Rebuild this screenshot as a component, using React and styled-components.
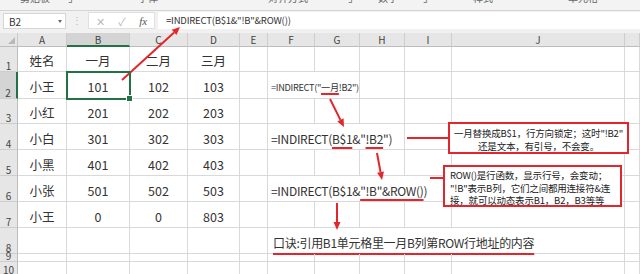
import React from 'react';
import styled, {createGlobalStyle} from 'styled-components';

const GlobalStyle = createGlobalStyle`
	html, body {
		margin: 0;
		padding: 0;
		background: #ffffff;
	}
	body {
		font-family: "Noto Sans CJK SC", "Noto Sans", sans-serif;
	}
`;

const RED = '#e3262b';
const GREEN = '#217346';

const Page = styled.div`
	position: relative;
	width: 640px;
	height: 274px;
	overflow: hidden;
	background: #ffffff;
`;

const Ribbon = styled.div`
	display: flex;
	height: 10px;
	overflow: hidden;
	background: #f3f3f3;
	border-bottom: 1px solid #d4d4d4;
`;

const RibbonLabel = styled.span`
	margin-left: ${(props) => props.$gap}px;
	margin-top: -8px;
	font-size: 10px;
	line-height: 12px;
	color: #666;
	white-space: nowrap;
`;

const FormulaBar = styled.div`
	display: flex;
	align-items: flex-start;
	height: 22px;
	background: #f1f1f1;
`;

const NameBox = styled.div`
	display: flex;
	align-items: center;
	justify-content: space-between;
	box-sizing: border-box;
	width: 63px;
	height: 16px;
	margin: 2px 0 0 3px;
	padding: 0 3px 0 5px;
	background: #ffffff;
	border: 1px solid #d6d6d6;
	font-size: 10px;
	color: #333;
`;

const Caret = styled.span`
	width: 0;
	height: 0;
	border-left: 2.5px solid transparent;
	border-right: 2.5px solid transparent;
	border-top: 3px solid #666;
`;

const Dots = styled.div`
	width: 22px;
	text-align: center;
	font-size: 10px;
	line-height: 18px;
	color: #b5b5b5;
`;

const ActionBox = styled.div`
	display: flex;
	align-items: center;
	justify-content: space-around;
	box-sizing: border-box;
	width: 67px;
	height: 17px;
	margin-top: 1px;
	background: #ffffff;
	border: 1px solid #e0e0e0;
	font-size: 11px;
	color: #b9b9b9;
`;

const Fx = styled.span`
	font-family: "Liberation Serif", serif;
	font-style: italic;
	font-size: 11px;
	color: #555;
`;

const FormulaInput = styled.div`
	flex: 1;
	box-sizing: border-box;
	height: 17px;
	margin: 1px 0 0 3px;
	padding-left: 8px;
	background: #ffffff;
	font-size: 9.5px;
	letter-spacing: -0.2px;
	line-height: 17px;
	color: #333;
	white-space: nowrap;
`;

const Sheet = styled.div`
	display: grid;
	grid-template-columns: 18px 49px 63px 58px 52px 28px 47px 45px 45px 47px 173px 15px;
	grid-template-rows: 14px 25px 27px 25px 26px 26px 26px 26px 26px 8px 14px;
`;

const Corner = styled.div`
	position: relative;
	box-sizing: border-box;
	background: #e6e6e6;
	border-right: 1px solid #c9c9c9;
	border-bottom: 1px solid #bdbdbd;
	&::after {
		content: '';
		position: absolute;
		right: 2px;
		bottom: 2px;
		border-left: 7px solid transparent;
		border-bottom: 7px solid #b9b9b9;
	}
`;

const ColHead = styled.div`
	display: flex;
	align-items: center;
	justify-content: center;
	box-sizing: border-box;
	background: ${(props) => (props.$active ? '#d4d4d4' : '#e6e6e6')};
	border-right: 1px solid #cdcdcd;
	border-bottom: ${(props) => (props.$active ? `2px solid ${GREEN}` : '1px solid #bdbdbd')};
	font-size: 10px;
	color: #444;
`;

const RowHead = styled.div`
	display: flex;
	align-items: flex-end;
	justify-content: center;
	box-sizing: border-box;
	background: ${(props) => (props.$active ? '#d4d4d4' : '#e6e6e6')};
	border-bottom: 1px solid #cdcdcd;
	border-right: ${(props) => (props.$active ? `2px solid ${GREEN}` : '1px solid #bdbdbd')};
	font-size: 10px;
	line-height: 10px;
	color: #444;
`;

const Cell = styled.div`
	position: relative;
	display: flex;
	align-items: center;
	justify-content: ${(props) => (props.$left ? 'flex-start' : 'center')};
	grid-column: span ${(props) => props.$span || 1};
	box-sizing: border-box;
	padding: 3px 0 0 ${(props) => (props.$left ? props.$indent || 3 : 0)}px;
	border-right: 1px solid #d9d9d9;
	border-bottom: 1px solid #d9d9d9;
	font-size: ${(props) => props.$size || 12.5}px;
	letter-spacing: ${(props) => (props.$left ? '-0.3px' : '0')};
	color: #333;
	white-space: nowrap;
	outline: ${(props) => (props.$selected ? `2px solid ${GREEN}` : 'none')};
	outline-offset: -1px;
	z-index: ${(props) => (props.$selected ? 2 : 0)};
	&::after {
		content: '';
		display: ${(props) => (props.$selected ? 'block' : 'none')};
		position: absolute;
		right: -4px;
		bottom: -4px;
		width: 5px;
		height: 5px;
		background: ${GREEN};
		border: 1px solid #ffffff;
	}
`;

const Mark = styled.span`
	text-decoration: underline;
	text-decoration-color: ${RED};
	text-decoration-thickness: 2px;
	text-underline-offset: ${(props) => props.$offset || 3}px;
	text-decoration-skip-ink: none;
`;

const Note = styled.div`
	position: absolute;
	left: ${(props) => props.$x}px;
	top: ${(props) => props.$y}px;
	box-sizing: border-box;
	width: ${(props) => props.$w}px;
	height: ${(props) => props.$h}px;
	padding: ${(props) => (props.$center ? '3px 0 0' : '2px 0 0 5px')};
	background: #ffffff;
	border: 2px solid ${RED};
	font-size: 9.5px;
	letter-spacing: -0.2px;
	line-height: ${(props) => (props.$center ? 13 : 12.5)}px;
	color: #222;
	text-align: ${(props) => (props.$center ? 'center' : 'left')};
	white-space: nowrap;
	overflow: hidden;
`;

const Marks = styled.svg`
	position: absolute;
	left: 0;
	top: 0;
	pointer-events: none;
`;

const letters = ['A', 'B', 'C', 'D', 'E', 'F', 'G', 'H', 'I', 'J', 'K'];

const table = [
	['姓名', '一月', '二月', '三月'],
	['小王', '101', '102', '103'],
	['小红', '201', '202', '203'],
	['小白', '301', '302', '303'],
	['小黑', '401', '402', '403'],
	['小张', '501', '502', '503'],
	['小王', '0', '0', '803'],
	[],
	[],
	[]
];

const notes = {
	2: {
		span: 2,
		size: 9.2,
		content: (
			<>
				=INDIRECT("<Mark $offset={2}>一月</Mark>!B2")
			</>
		)
	},
	4: {
		span: 3,
		size: 12,
		content: (
			<>
				=INDIRECT(<Mark>B$1</Mark>&"<Mark>!B2</Mark>")
			</>
		)
	},
	6: {
		span: 4,
		size: 12,
		content: (
			<>
				=INDIRECT(B$1&<Mark>"!B"&ROW()</Mark>)
			</>
		)
	},
	8: {
		span: 5,
		size: 12,
		indent: 5,
		content: <Mark $offset={5}>口诀:引用B1单元格里一月B列第ROW行地址的内容</Mark>
	}
};

function Arrow({x1, y1, x2, y2}) {
	const dx = x2 - x1;
	const dy = y2 - y1;
	const len = Math.hypot(dx, dy);
	const ux = dx / len;
	const uy = dy / len;
	const bx = x2 - ux * 8;
	const by = y2 - uy * 8;
	const px = -uy * 3.5;
	const py = ux * 3.5;
	return (
		<>
			<line x1={x1} y1={y1} x2={bx} y2={by} stroke={RED} strokeWidth="2" />
			<polygon
				points={`${x2},${y2} ${bx + px},${by + py} ${bx - px},${by - py}`}
				fill={RED}
			/>
		</>
	);
}

function SheetRows() {
	const out = [];
	table.forEach((row, r) => {
		const num = r + 1;
		out.push(
			<RowHead key={`h${num}`} $active={num === 2}>
				{num}
			</RowHead>
		);
		const note = notes[num];
		let c = 0;
		while (c < letters.length) {
			if (note && c === 5) {
				out.push(
					<Cell
						key={`${num}-${c}`}
						$left
						$span={note.span}
						$size={note.size}
						$indent={note.indent}
					>
						{note.content}
					</Cell>
				);
				c += note.span;
				continue;
			}
			out.push(
				<Cell key={`${num}-${c}`} $selected={num === 2 && c === 1}>
					{row[c] || ''}
				</Cell>
			);
			c += 1;
		}
	});
	return out;
}

export default function App() {
	return (
		<>
			<GlobalStyle />
			<Page>
				<Ribbon>
					<RibbonLabel $gap={20}>剪贴板</RibbonLabel>
					<RibbonLabel $gap={18}>⌟</RibbonLabel>
					<RibbonLabel $gap={65}>字体</RibbonLabel>
					<RibbonLabel $gap={110}>对齐方式</RibbonLabel>
					<RibbonLabel $gap={40}>⌟</RibbonLabel>
					<RibbonLabel $gap={25}>数字</RibbonLabel>
					<RibbonLabel $gap={25}>⌟</RibbonLabel>
					<RibbonLabel $gap={45}>样式</RibbonLabel>
					<RibbonLabel $gap={75}>单元格</RibbonLabel>
				</Ribbon>
				<FormulaBar>
					<NameBox>
						B2
						<Caret />
					</NameBox>
					<Dots>⋮</Dots>
					<ActionBox>
						<span>✕</span>
						<span>✓</span>
						<Fx>fx</Fx>
					</ActionBox>
					<FormulaInput>=INDIRECT(B$1&"!B"&ROW())</FormulaInput>
				</FormulaBar>
				<Sheet>
					<Corner />
					{letters.map((l) => (
						<ColHead key={l} $active={l === 'B'}>
							{l === 'K' ? '' : l}
						</ColHead>
					))}
					<SheetRows />
				</Sheet>
				<Note $x={448} $y={122} $w={181} $h={32} $center>
					一月替换成B$1，行方向锁定；这时"!B2"
					<br />
					还是文本，有引号，不会变。
				</Note>
				<Note $x={443} $y={165} $w={179} $h={42}>
					ROW()是行函数，显示行号，会变动；
					<br />
					"!B"表示B列，它们之间都用连接符&连
					<br />
					接，就可以动态表示B1，B2，B3等等
				</Note>
				<Marks width="640" height="274" viewBox="0 0 640 274">
					<Arrow x1={122} y1={80} x2={180} y2={27} />
					<Arrow x1={330} y1={99} x2={344} y2={127} />
					<Arrow x1={377} y1={153} x2={382} y2={180} />
					<Arrow x1={337} y1={203} x2={337} y2={230} />
					<line x1={407} y1={138} x2={448} y2={138} stroke={RED} strokeWidth="2" />
					<line x1={430} y1={178} x2={443} y2={178} stroke={RED} strokeWidth="2" />
				</Marks>
			</Page>
		</>
	);
}
